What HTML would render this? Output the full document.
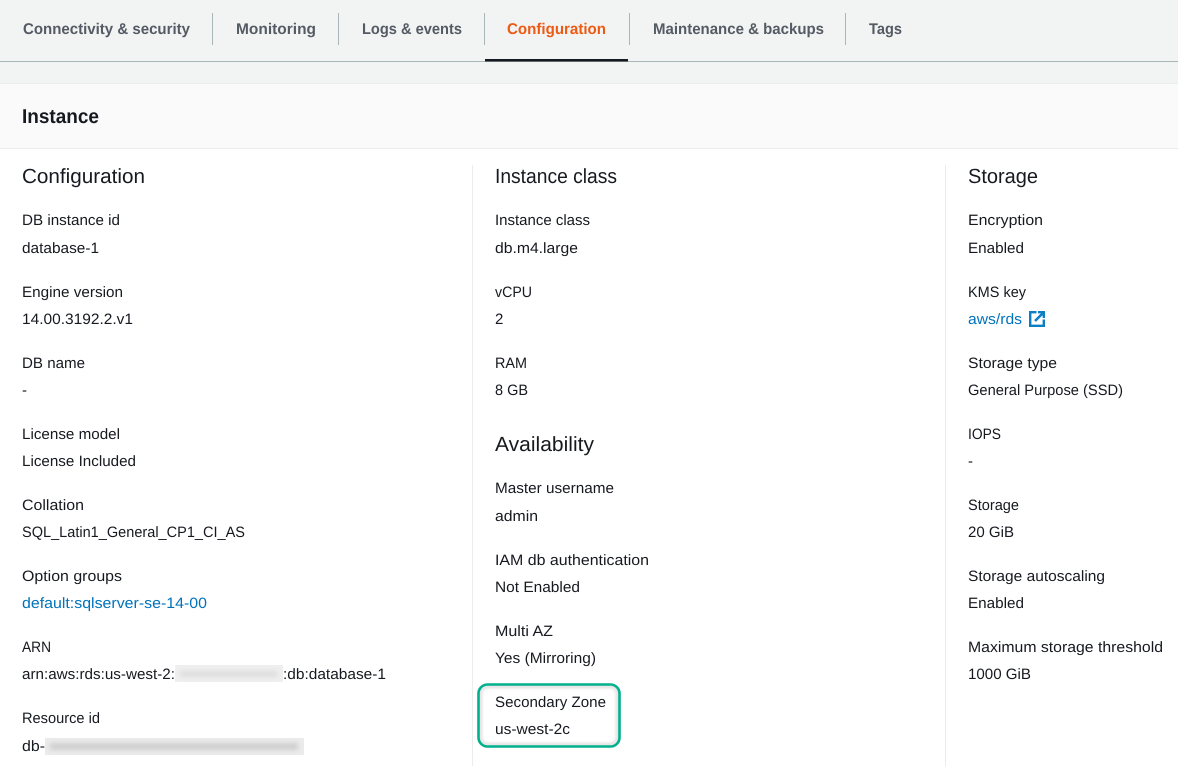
<!DOCTYPE html>
<html><head><meta charset="utf-8"><style>
html,body{margin:0;padding:0;background:#fff;width:1178px;height:766px;overflow:hidden}
svg{display:block;font-family:"Liberation Sans",sans-serif;text-rendering:geometricPrecision}
.t{font-size:15px;fill:#16191f}
.h{font-size:20.5px;fill:#16191f}
.l{font-size:15px;fill:#0073bb}
.tab{font-size:15.5px;font-weight:bold;fill:#545b64}
</style></head><body>
<svg width="1178" height="766" viewBox="0 0 1178 766" xmlns="http://www.w3.org/2000/svg">
<defs>
<filter id="b" x="-10%" y="-80%" width="120%" height="260%"><feGaussianBlur stdDeviation="2.5"/></filter>
<filter id="s" x="-10%" y="-20%" width="120%" height="140%"><feGaussianBlur stdDeviation="1.5"/></filter>
</defs>
<rect width="1178" height="84" fill="#f2f3f3"/>
<rect y="61" width="1178" height="1" fill="#aab7b8"/>
<rect x="485" y="59" width="143" height="2.5" fill="#16191f"/>
<rect y="83" width="1178" height="1" fill="#eaeded"/>
<rect y="84" width="1178" height="64" fill="#fafafa"/>
<rect y="148" width="1178" height="1" fill="#eaeded"/>
<g fill="#aab7b8">
<rect x="212" y="13" width="1" height="32"/><rect x="338" y="13" width="1" height="32"/><rect x="484" y="13" width="1" height="32"/><rect x="629" y="13" width="1" height="32"/><rect x="845" y="13" width="1" height="32"/>
</g>
<g>
<text class="tab" x="23" y="34" textLength="167" lengthAdjust="spacingAndGlyphs">Connectivity &amp; security</text>
<text class="tab" x="236" y="34" textLength="80" lengthAdjust="spacingAndGlyphs">Monitoring</text>
<text class="tab" x="362" y="34" textLength="100" lengthAdjust="spacingAndGlyphs">Logs &amp; events</text>
<text class="tab" style="fill:#ec5a14" x="507" y="34" textLength="99" lengthAdjust="spacingAndGlyphs">Configuration</text>
<text class="tab" x="653" y="34" textLength="171" lengthAdjust="spacingAndGlyphs">Maintenance &amp; backups</text>
<text class="tab" x="869" y="34" textLength="33" lengthAdjust="spacingAndGlyphs">Tags</text>
</g>
<text x="22" y="123" font-size="20" font-weight="bold" fill="#16191f" textLength="77" lengthAdjust="spacingAndGlyphs">Instance</text>
<rect x="472" y="165" width="1" height="601" fill="#eaeded"/>
<rect x="945" y="165" width="1" height="601" fill="#eaeded"/>

<text class="h" x="22" y="183" textLength="123" lengthAdjust="spacingAndGlyphs">Configuration</text>
<text class="t" x="22" y="225" textLength="98" lengthAdjust="spacingAndGlyphs">DB instance id</text>
<text class="t" x="22" y="253" textLength="77" lengthAdjust="spacingAndGlyphs">database-1</text>
<text class="t" x="22" y="297" textLength="101" lengthAdjust="spacingAndGlyphs">Engine version</text>
<text class="t" x="22" y="324" textLength="111" lengthAdjust="spacingAndGlyphs">14.00.3192.2.v1</text>
<text class="t" x="22" y="368" textLength="63" lengthAdjust="spacingAndGlyphs">DB name</text>
<text class="t" x="22" y="395">-</text>
<text class="t" x="22" y="439" textLength="98" lengthAdjust="spacingAndGlyphs">License model</text>
<text class="t" x="22" y="466" textLength="114" lengthAdjust="spacingAndGlyphs">License Included</text>
<text class="t" x="22" y="510" textLength="62" lengthAdjust="spacingAndGlyphs">Collation</text>
<text class="t" x="22" y="537" textLength="223" lengthAdjust="spacingAndGlyphs">SQL_Latin1_General_CP1_CI_AS</text>
<text class="t" x="22" y="581" textLength="100" lengthAdjust="spacingAndGlyphs">Option groups</text>
<text class="l" x="22" y="608" textLength="185" lengthAdjust="spacingAndGlyphs">default:sqlserver-se-14-00</text>
<text class="t" x="22" y="652" textLength="29" lengthAdjust="spacingAndGlyphs">ARN</text>
<text class="t" x="22" y="679" textLength="153" lengthAdjust="spacingAndGlyphs">arn:aws:rds:us-west-2:</text>
<rect x="175" y="665" width="108" height="17" fill="#efefef"/>
<rect x="180" y="671" width="98" height="6" fill="#dedede" filter="url(#b)"/>
<text class="t" x="283" y="679" textLength="103" lengthAdjust="spacingAndGlyphs">:db:database-1</text>
<text class="t" x="22" y="723" textLength="78" lengthAdjust="spacingAndGlyphs">Resource id</text>
<text class="t" x="22" y="751" textLength="23" lengthAdjust="spacingAndGlyphs">db-</text>
<rect x="45" y="738" width="259" height="17" fill="#ebebeb"/>
<rect x="50" y="743" width="248" height="7" fill="#cfcfcf" filter="url(#b)"/>

<text class="h" x="495" y="183" textLength="122" lengthAdjust="spacingAndGlyphs">Instance class</text>
<text class="t" x="495" y="225" textLength="95" lengthAdjust="spacingAndGlyphs">Instance class</text>
<text class="t" x="495" y="253" textLength="83" lengthAdjust="spacingAndGlyphs">db.m4.large</text>
<text class="t" x="495" y="297" textLength="37" lengthAdjust="spacingAndGlyphs">vCPU</text>
<text class="t" x="495" y="324">2</text>
<text class="t" x="495" y="368" textLength="32" lengthAdjust="spacingAndGlyphs">RAM</text>
<text class="t" x="495" y="395" textLength="33" lengthAdjust="spacingAndGlyphs">8 GB</text>
<text class="h" x="495" y="451" textLength="99" lengthAdjust="spacingAndGlyphs">Availability</text>
<text class="t" x="495" y="493" textLength="119" lengthAdjust="spacingAndGlyphs">Master username</text>
<text class="t" x="495" y="521" textLength="43" lengthAdjust="spacingAndGlyphs">admin</text>
<text class="t" x="495" y="565" textLength="154" lengthAdjust="spacingAndGlyphs">IAM db authentication</text>
<text class="t" x="495" y="592" textLength="85" lengthAdjust="spacingAndGlyphs">Not Enabled</text>
<text class="t" x="495" y="636" textLength="58" lengthAdjust="spacingAndGlyphs">Multi AZ</text>
<text class="t" x="495" y="663" textLength="101" lengthAdjust="spacingAndGlyphs">Yes (Mirroring)</text>
<rect x="480.5" y="686.5" width="137" height="58" rx="7" fill="none" stroke="#888" stroke-width="2" opacity=".45" filter="url(#s)"/>
<rect x="478.5" y="684.5" width="141" height="62" rx="9" fill="none" stroke="#01b08c" stroke-width="2.6"/>
<text class="t" x="495" y="707" textLength="111" lengthAdjust="spacingAndGlyphs">Secondary Zone</text>
<text class="t" x="495" y="734" textLength="75" lengthAdjust="spacingAndGlyphs">us-west-2c</text>

<text class="h" x="968" y="183" textLength="70" lengthAdjust="spacingAndGlyphs">Storage</text>
<text class="t" x="968" y="225" textLength="75" lengthAdjust="spacingAndGlyphs">Encryption</text>
<text class="t" x="968" y="253" textLength="56" lengthAdjust="spacingAndGlyphs">Enabled</text>
<text class="t" x="968" y="297" textLength="58" lengthAdjust="spacingAndGlyphs">KMS key</text>
<text class="l" x="968" y="324" textLength="54" lengthAdjust="spacingAndGlyphs">aws/rds</text>
<g fill="none" stroke="#0a7fc4">
<path d="M1036.5 312.2H1030.2V325.8H1043.8V319.5" stroke-width="2.4"/>
<path d="M1035 321L1043 313" stroke-width="2.6"/>
<path d="M1038 312.2H1043.8V318" stroke-width="2.4"/>
</g>
<text class="t" x="968" y="368" textLength="89" lengthAdjust="spacingAndGlyphs">Storage type</text>
<text class="t" x="968" y="395" textLength="155" lengthAdjust="spacingAndGlyphs">General Purpose (SSD)</text>
<text class="t" x="968" y="439" textLength="33" lengthAdjust="spacingAndGlyphs">IOPS</text>
<text class="t" x="968" y="466">-</text>
<text class="t" x="968" y="510" textLength="51" lengthAdjust="spacingAndGlyphs">Storage</text>
<text class="t" x="968" y="537" textLength="46" lengthAdjust="spacingAndGlyphs">20 GiB</text>
<text class="t" x="968" y="581" textLength="137" lengthAdjust="spacingAndGlyphs">Storage autoscaling</text>
<text class="t" x="968" y="608" textLength="56" lengthAdjust="spacingAndGlyphs">Enabled</text>
<text class="t" x="968" y="652" textLength="195" lengthAdjust="spacingAndGlyphs">Maximum storage threshold</text>
<text class="t" x="968" y="679" textLength="63" lengthAdjust="spacingAndGlyphs">1000 GiB</text>
</svg>
</body></html>
